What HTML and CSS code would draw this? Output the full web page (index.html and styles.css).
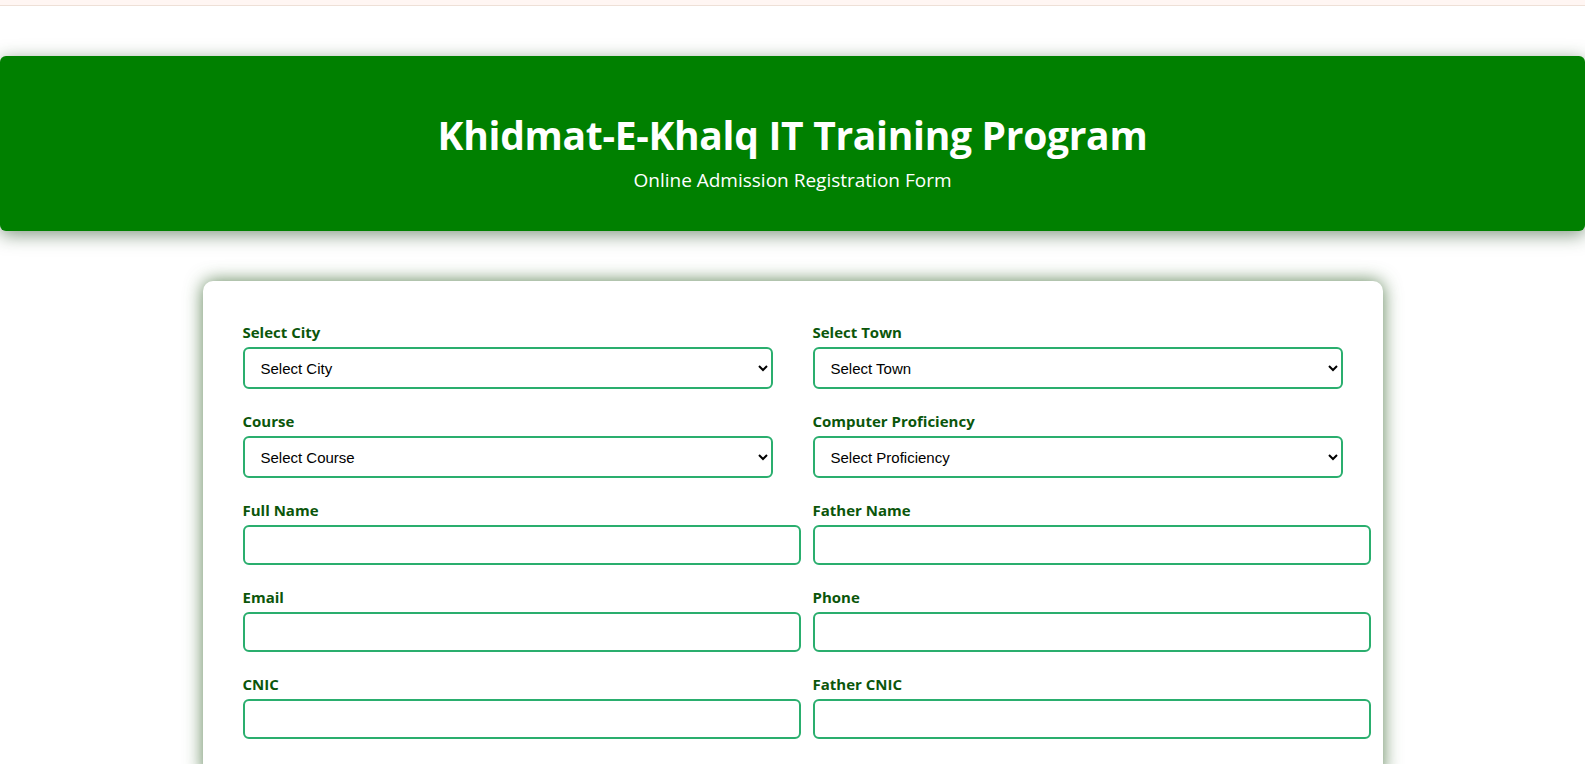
FILE: index.html
```html
<!DOCTYPE html>
<html lang="en">
<head>
<meta charset="utf-8">
<title>Khidmat-E-Khalq IT Training Program</title>
<link rel="stylesheet" href="styles.css">
</head>
<body>
<div class="topstrip"></div>
<header class="hero">
  <h1 class="hero-title">Khidmat-E-Khalq IT Training Program</h1>
  <p class="hero-sub">Online Admission Registration Form</p>
</header>
<main class="card">
  <form class="form-grid">
    <div class="field">
      <label class="field-label">Select City</label>
      <select class="field-select"><option>Select City</option></select>
    </div>
    <div class="field">
      <label class="field-label">Select Town</label>
      <select class="field-select"><option>Select Town</option></select>
    </div>
    <div class="field">
      <label class="field-label">Course</label>
      <select class="field-select"><option>Select Course</option></select>
    </div>
    <div class="field">
      <label class="field-label">Computer Proficiency</label>
      <select class="field-select"><option>Select Proficiency</option></select>
    </div>
    <div class="field">
      <label class="field-label">Full Name</label>
      <input class="field-input" type="text">
    </div>
    <div class="field">
      <label class="field-label">Father Name</label>
      <input class="field-input" type="text">
    </div>
    <div class="field">
      <label class="field-label">Email</label>
      <input class="field-input" type="email">
    </div>
    <div class="field">
      <label class="field-label">Phone</label>
      <input class="field-input" type="text">
    </div>
    <div class="field">
      <label class="field-label">CNIC</label>
      <input class="field-input" type="text">
    </div>
    <div class="field">
      <label class="field-label">Father CNIC</label>
      <input class="field-input" type="text">
    </div>
  </form>
</main>
</body>
</html>
```

FILE: styles.css
```css
html, body {
  margin: 0;
  padding: 0;
  background: #ffffff;
  font-family: "Open Sans", "Noto Sans", sans-serif;
}

.topstrip {
  height: 5px;
  background: #fff6f3;
  border-bottom: 1px solid #eee0d7;
}

.hero {
  margin-top: 50px;
  background: #008000;
  color: #ffffff;
  text-align: center;
  border-radius: 6px;
  box-shadow: 0 4px 18px rgba(30, 70, 30, 0.55);
  padding: 55px 20px 39px;
  height: 81px;
}

.hero-title {
  margin: 0 0 9px;
  font-size: 39px;
  line-height: 48px;
  font-weight: 700;
  letter-spacing: -0.3px;
}

.hero-sub {
  margin: 0;
  font-size: 19px;
  line-height: 24px;
  font-weight: 400;
}

.card {
  width: 1100px;
  margin: 50px auto 40px;
  padding: 42px 40px 40px;
  background: #ffffff;
  border-radius: 10px;
  box-shadow: 0 0 18px rgba(40, 90, 30, 0.75);
}

.form-grid {
  display: grid;
  grid-template-columns: 530px 530px;
  column-gap: 40px;
  row-gap: 23px;
}

.field {
  display: flex;
  flex-direction: column;
}

.field-label {
  font-size: 15px;
  line-height: 19px;
  font-weight: 700;
  color: #0b560b;
  margin-bottom: 5px;
}

.field-select {
  box-sizing: border-box;
  width: 530px;
  height: 42px;
  padding: 0 12px;
  border: 2px solid #2aae6e;
  border-radius: 6px;
  background: #ffffff;
  font-family: "Liberation Sans", Arial, sans-serif;
  font-size: 15px;
  color: #000000;
}

.field-input {
  box-sizing: content-box;
  width: 530px;
  height: 36px;
  padding: 0 12px;
  border: 2px solid #2aae6e;
  border-radius: 6px;
  background: #ffffff;
  font-family: "Liberation Sans", Arial, sans-serif;
  font-size: 15px;
}
```
